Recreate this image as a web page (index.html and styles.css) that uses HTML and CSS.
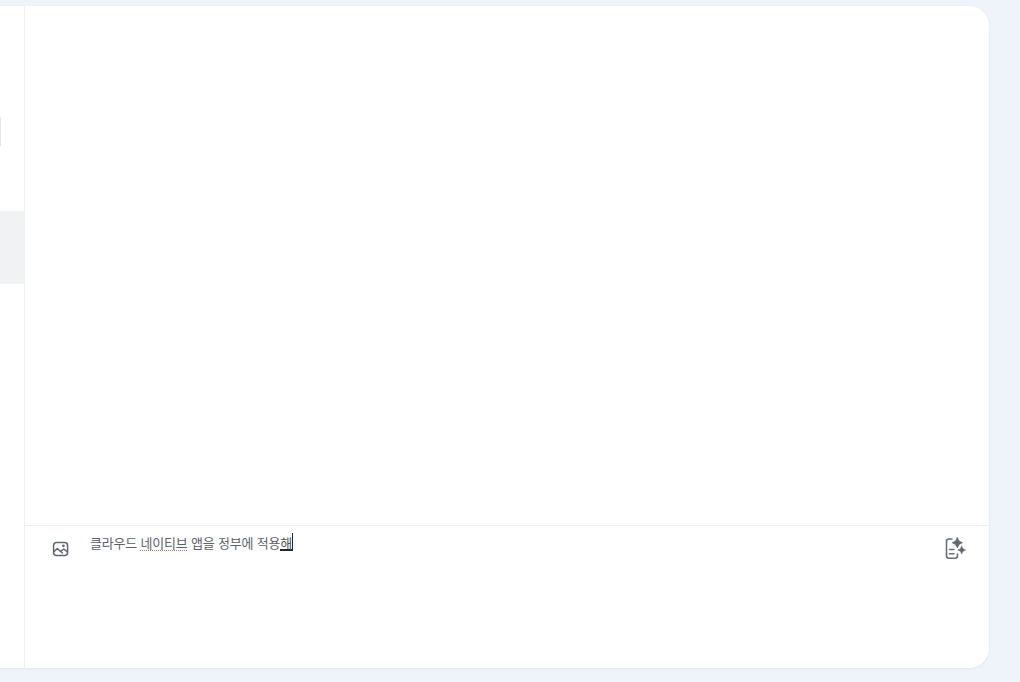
FILE: index.html
```html
<!DOCTYPE html>
<html lang="ko">
<head>
<meta charset="utf-8">
<title>채팅</title>
<link rel="stylesheet" href="styles.css">
</head>
<body>
<div class="panel">
  <aside class="sidebar">
    <div class="mark"></div>
    <div class="item"></div>
  </aside>
  <main class="main">
    <div class="messages"></div>
    <div class="composer">
      <button class="icon-btn image-btn" aria-label="이미지">
        <svg width="18" height="18" viewBox="0 0 18 18" fill="none" stroke="#5f6670" stroke-width="1.5" stroke-linejoin="round" stroke-linecap="round">
          <rect x="1.600" y="2.600" width="14" height="13" rx="3"/>
          <path d="M1.800 11.800 5.200 8.600 10.400 13"/>
          <path d="M9 11.200 11.800 9 15.400 11.800"/>
          <circle cx="11.400" cy="5.800" r=".6"/>
        </svg>
      </button>
      <div class="input"><span>클라우드</span> <span class="misspelled">네이티브</span> <span>앱을 정부에 적용</span><span class="composing">해</span></div>
      <button class="icon-btn summary-btn" aria-label="요약">
        <svg width="24" height="24" viewBox="0 0 24 24" fill="none" stroke="#6a7079" stroke-width="1.600" stroke-linecap="round" stroke-linejoin="round">
          <path d="M9 2H6A2.500 2.500 0 0 0 3.500 4.500V18.700A2.500 2.500 0 0 0 6 21.200H12A2.500 2.500 0 0 0 14.500 18.700V17"/>
          <path d="M6.500 12.500H11M6.500 16.800H11"/>
          <path d="M14.300 .5 16.100 3.900 19.500 5.700 16.100 7.500 14.300 10.900 12.500 7.500 9.100 5.700 12.500 3.900Z" fill="#5f6670" stroke="#5f6670" stroke-width=".6"/>
          <path d="M18.700 9 20 11.700 22.700 13 20 14.300 18.700 17 17.400 14.300 14.700 13 17.400 11.700Z" fill="#5f6670" stroke="#5f6670" stroke-width=".4"/>
        </svg>
      </button>
    </div>
  </main>
</div>
</body>
</html>
```
FILE: styles.css
```css
* { box-sizing: border-box; }
html, body { height: 100%; margin: 0; }
body {
  background: #eff3fa;
  padding: 6px 31px 14px 0;
  overflow: hidden;
  font-family: "Noto Sans CJK KR", "Noto Sans", sans-serif;
}
.panel {
  display: flex;
  height: 662px;
  background: #fff;
  border-radius: 0 20px 20px 0;
  box-shadow: 0 1px 3px rgba(40, 60, 100, .06);
  overflow: hidden;
}
.sidebar {
  width: 25px;
  flex: none;
  border-right: 1px solid #eeeff1;
  padding-top: 111px;
}
.mark {
  width: 1px;
  height: 29px;
  background: #e6e7ea;
}
.item {
  height: 73px;
  margin-top: 65px;
  background: #f1f2f4;
}
.main {
  flex: 1;
  display: flex;
  flex-direction: column;
  min-width: 0;
}
.messages { flex: 1; }
.composer {
  height: 143px;
  border-top: 1px solid #eff0f2;
  display: flex;
  align-items: flex-start;
  padding: 0 22px 0 27px;
}
.icon-btn {
  border: 0;
  padding: 0;
  background: none;
  display: flex;
  flex: none;
}
.image-btn { margin-top: 14px; }
.summary-btn { margin-top: 11px; margin-left: auto; }
.input {
  margin-left: 20px;
  margin-top: 7px;
  font-size: 13px;
  letter-spacing: -0.2px;
  line-height: 20px;
  color: #5b626b;
  white-space: pre;
}
.misspelled {
  text-decoration: underline dotted #c9785f 1px;
  text-underline-offset: 2px;
}
.composing {
  color: #4a5058;
  display: inline-block;
  height: 18px;
  line-height: 20px;
  border-bottom: 2px solid #23272d;
  border-right: 1px solid #23272d;
  vertical-align: top;
}
```
